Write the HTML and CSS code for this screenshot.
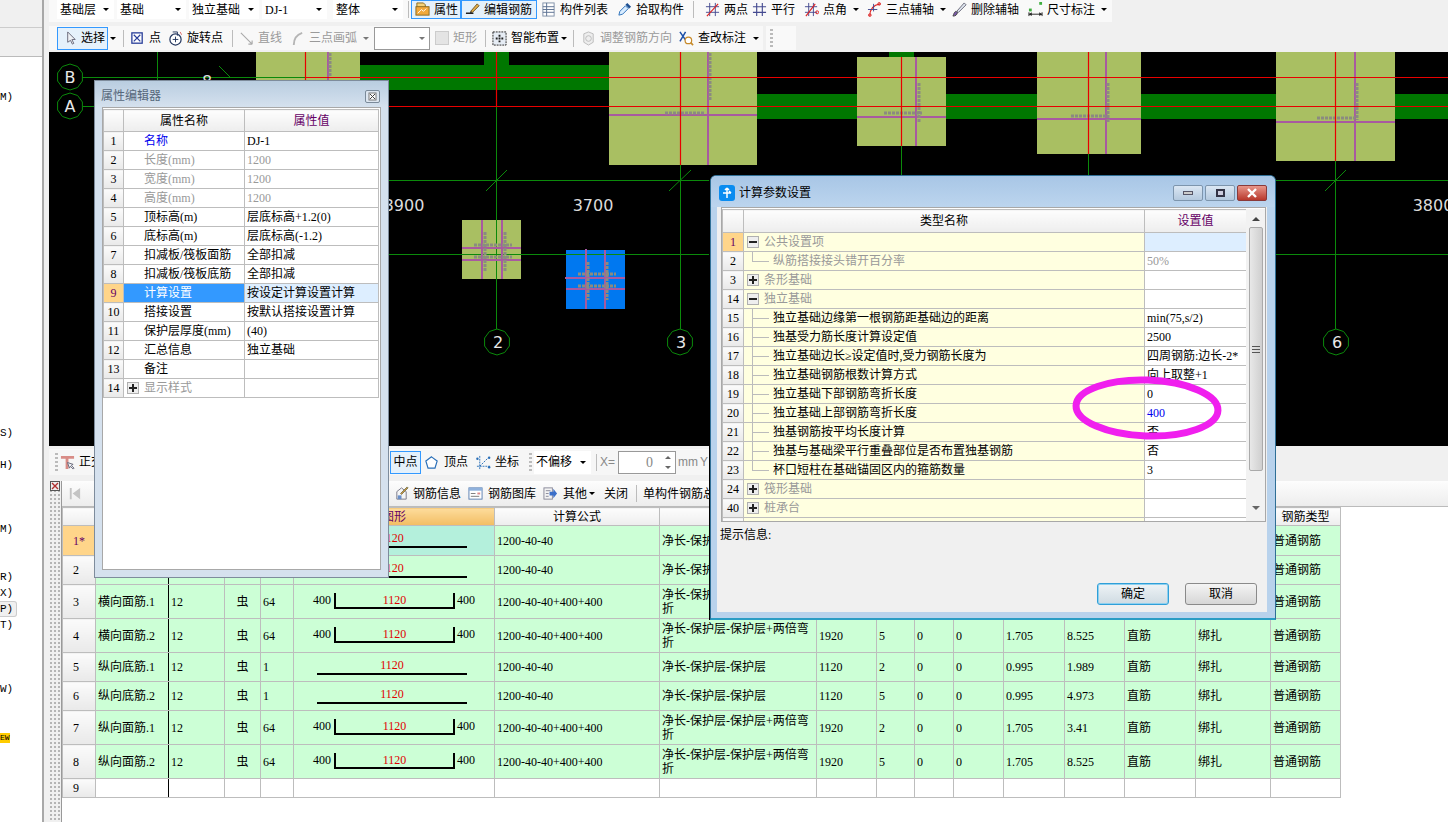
FILE: index.html
```html
<!DOCTYPE html>
<html lang="zh-CN">
<head>
<meta charset="utf-8">
<title>钢筋算量</title>
<link rel="stylesheet" href="styles.css">
</head>
<body>
<svg class="defs" width="0" height="0" aria-hidden="true">
  <symbol id="i-attr" viewBox="0 0 16 16"><path d="M2 1h7l2 2v3H2z" fill="#f4d27a" stroke="#8a6a20"/><rect x="1" y="5" width="14" height="9" fill="#f2a93b" stroke="#8a6a20"/><path d="M3 12l4-4 2 2 3-3" stroke="#fff" fill="none"/></symbol>
  <symbol id="i-edit" viewBox="0 0 16 16"><path d="M1 12h8" stroke="#222" stroke-width="1.6"/><path d="M6 10l7-8 2 2-7 7z" fill="#e7b04a" stroke="#6a5020"/><path d="M5 12l1-2 2 1z" fill="#222"/></symbol>
  <symbol id="i-list" viewBox="0 0 16 16"><rect x="2" y="1" width="12" height="14" fill="#fff" stroke="#8090a8"/><path d="M6 1v14M2 5h12M2 8h12M2 11h12" stroke="#5a6f90"/></symbol>
  <symbol id="i-pick" viewBox="0 0 16 16"><path d="M2 14l1-4 6-6 3 3-6 6z" fill="#d8ecff" stroke="#2a6fb8"/><path d="M9 3l2-2 4 4-2 2z" fill="#1d4f91"/></symbol>
  <symbol id="i-two" viewBox="0 0 16 16"><path d="M5 1v14M11 1v14M1 5h14M1 11h14" stroke="#444a90"/><path d="M2 15L14 2" stroke="#d22" stroke-width="1.2"/></symbol>
  <symbol id="i-par" viewBox="0 0 16 16"><path d="M5 1v14M11 1v14M1 5h14M1 11h14" stroke="#444a90" stroke-width="1.2"/></symbol>
  <symbol id="i-ang" viewBox="0 0 16 16"><path d="M5 1v14M10 1v14M1 5h13M1 11h13" stroke="#444a90"/><path d="M2 15L12 2" stroke="#d22" stroke-width="1.2"/><circle cx="14" cy="11" r="1.6" fill="none" stroke="#d22"/></symbol>
  <symbol id="i-arc" viewBox="0 0 16 16"><path d="M3 15C3 8 7 3 14 2" fill="none" stroke="#d22" stroke-width="1.2"/><path d="M1 8h10M7 2v8" stroke="#444a90"/><circle cx="13" cy="2" r="1.4" fill="none" stroke="#d22"/><circle cx="3" cy="14" r="1.4" fill="none" stroke="#d22"/></symbol>
  <symbol id="i-del" viewBox="0 0 16 16"><path d="M1 15c3 0 4-1 5-4l-2-1c-2 1-2 3-3 5z" fill="#7a5aa8" stroke="#444"/><path d="M5 10L13 1l2 2-8 8z" fill="#dfe6ef" stroke="#667"/></symbol>
  <symbol id="i-dim" viewBox="0 0 16 16"><rect x="1" y="7" width="3" height="3" fill="#3fae3f"/><rect x="12" y="0" width="3" height="3" fill="#3fae3f"/><path d="M1 11v4M15 11v4M1 13h14" stroke="#222"/><path d="M1 13l3-2v4zM15 13l-3-2v4z" fill="#222"/></symbol>
  <symbol id="i-sel" viewBox="0 0 16 16"><path d="M5 1v11l3-2 2 4 1.500-.8-2-4 3.500-.2z" fill="#eef1f5" stroke="#667"/></symbol>
  <symbol id="i-pt" viewBox="0 0 16 16"><rect x="2" y="2" width="11" height="11" fill="#fff" stroke="#2a3f9a" stroke-width="1.400"/><path d="M4 4l7 7M11 4l-7 7" stroke="#2a3f9a" stroke-width="1.300"/></symbol>
  <symbol id="i-rot" viewBox="0 0 16 16"><circle cx="8" cy="9" r="6" fill="#fff" stroke="#23365e" stroke-width="1.300"/><path d="M8 6v6M5 9h6" stroke="#23365e"/><path d="M5 1h5v4" fill="none" stroke="#23365e"/><path d="M13 1l1.500 3" stroke="#d66"/></symbol>
  <symbol id="i-line" viewBox="0 0 16 16"><path d="M2 2l12 12M14 14l-4 0M14 14l0-4" stroke="#aaa" fill="none" stroke-width="1.200"/></symbol>
  <symbol id="i-garc" viewBox="0 0 16 16"><path d="M4 15C4 9 7 4 13 2" stroke="#b5b5b5" fill="none" stroke-width="2"/></symbol>
  <symbol id="i-smart" viewBox="0 0 16 16"><rect x="1" y="1" width="14" height="14" fill="#e6ecf4" stroke="#222" stroke-dasharray="2 1"/><path d="M8 4v8M4 8h8" stroke="#222" stroke-width="2" stroke-dasharray="2 1"/></symbol>
  <symbol id="i-adj" viewBox="0 0 16 16"><path d="M3 3l5-2 5 2v9l-5 3-5-3z" fill="#eee" stroke="#bbb"/><circle cx="8" cy="8" r="3" fill="none" stroke="#bbb"/></symbol>
  <symbol id="i-chk" viewBox="0 0 16 16"><path d="M1 1l7 10M7 1L1 11" stroke="#1b4fa8" stroke-width="1.600"/><circle cx="10" cy="10" r="3.500" fill="#fff" stroke="#c78a2a" stroke-width="1.300"/><path d="M12.500 12.500l2.500 2.500" stroke="#c78a2a" stroke-width="1.800"/></symbol>
  <symbol id="i-t" viewBox="0 0 16 16"><path d="M1 1h14v3H9v11H6V4H1z" fill="#d88c86"/><path d="M8 8l2 6 1-2 3 3 1-1-3-3 2-1z" fill="#eef1f5" stroke="#667"/></symbol>
  <symbol id="i-pent" viewBox="0 0 16 16"><path d="M8 2l6 4.500-2.300 7.500H4.300L2 6.500z" fill="#fff" stroke="#2a6fb8" stroke-width="1.300"/></symbol>
  <symbol id="i-coord" viewBox="0 0 16 16"><path d="M4 1v14M1 12h14M4 12L13 3" stroke="#2a6fb8" fill="none" stroke-dasharray="2 1"/><circle cx="1.500" cy="4" r="1.300" fill="#2a6fb8"/><circle cx="14" cy="3" r="1.300" fill="#2a6fb8"/><circle cx="14" cy="13" r="1.300" fill="#2a6fb8"/></symbol>
  <symbol id="i-info" viewBox="0 0 16 16"><path d="M3 6l5-4 5 4v8H3z" fill="#f5f5f5" stroke="#778"/><path d="M7 8L14 1l1 1-7 7z" fill="#d89a3a" stroke="#775"/><rect x="4" y="10" width="4" height="4" fill="#6a8fc8"/></symbol>
  <symbol id="i-lib" viewBox="0 0 16 16"><rect x="1" y="2" width="14" height="12" fill="#fff" stroke="#5a7fb0"/><rect x="1" y="2" width="14" height="3" fill="#8fb1dc"/><path d="M3 8h5M3 11h9" stroke="#777"/><rect x="10" y="7" width="3" height="2" fill="#d88"/></symbol>
  <symbol id="i-other" viewBox="0 0 16 16"><rect x="1" y="2" width="9" height="12" fill="#f3f3f3" stroke="#889"/><path d="M3 5h5M3 8h3M3 11h3" stroke="#889"/><path d="M7 6h4V3l4 5-4 5v-3H7z" fill="#3b6fc9"/></symbol>
  <symbol id="i-first" viewBox="0 0 16 16"><path d="M3 2h2v12H3zM14 2v12L6 8z" fill="#c4c4c4"/></symbol>
  <symbol id="bub" viewBox="-14 -14 28 28"><path d="M12.400 4L7.600 10.500 0 13-7.600 10.500-12.400 4-12.400-4-7.600-10.500 0-13 7.600-10.500 12.400-4z" fill="none" stroke="#0b8a0b"/></symbol>
</svg>

<div class="app">
  <aside class="side">
    <div class="side-top"></div>
    <div class="side-top2"></div>
    <ul class="menu">
      <li></li><li></li><li>M)</li><li></li><li></li><li></li><li></li><li></li><li></li><li></li><li></li><li></li><li></li><li></li><li></li><li></li><li></li><li></li><li></li><li></li><li></li><li></li><li></li>
      <li>S)</li><li></li><li>H)</li><li></li><li></li><li></li><li>M)</li><li></li><li></li><li>R)</li><li>X)</li><li class="on">P)</li><li>T)</li><li></li><li></li><li></li><li>W)</li><li></li><li></li><li><span class="ew">EW</span></li>
    </ul>
  </aside>

  <main class="main">
    <div class="bar bar1">
      <span class="combo w60">基础层<i class="arr"></i></span>
      <span class="combo w72">基础<i class="arr"></i></span>
      <span class="combo w73">独立基础<i class="arr"></i></span>
      <span class="combo w71">DJ-1<i class="arr"></i></span>
      <span class="combo w70">整体<i class="arr"></i></span>
      <span class="sep m5"></span>
      <span class="t pressed w50 m2"><svg class="ic"><use href="#i-attr"/></svg>属性</span>
      <span class="t pressed w76"><svg class="ic"><use href="#i-edit"/></svg>编辑钢筋</span>
      <span class="t m4"><svg class="ic"><use href="#i-list"/></svg>构件列表</span>
      <span class="t m9"><svg class="ic"><use href="#i-pick"/></svg>拾取构件</span>
      <span class="sep m9"></span>
      <span class="t m11"><svg class="ic"><use href="#i-two"/></svg>两点</span>
      <span class="t m4"><svg class="ic"><use href="#i-par"/></svg>平行</span>
      <span class="t m9"><svg class="ic"><use href="#i-ang"/></svg>点角</span><i class="arr m6"></i>
      <span class="t m8"><svg class="ic"><use href="#i-arc"/></svg>三点辅轴</span><i class="arr m6"></i>
      <span class="t m6"><svg class="ic"><use href="#i-del"/></svg>删除辅轴</span>
      <span class="t m9"><svg class="ic"><use href="#i-dim"/></svg>尺寸标注</span><i class="arr m6"></i>
    </div>

    <div class="bar-row2">
      <div class="bar bar2">
        <span class="t selected w51"><svg class="ic"><use href="#i-sel"/></svg>选择</span><i class="arr m2"></i>
        <span class="sep m7"></span>
        <span class="t m6"><svg class="ic"><use href="#i-pt"/></svg>点</span>
        <span class="t m7"><svg class="ic"><use href="#i-rot"/></svg>旋转点</span>
        <span class="sep m9"></span>
        <span class="t off m6"><svg class="ic"><use href="#i-line"/></svg>直线</span>
        <span class="t off m8"><svg class="ic"><use href="#i-garc"/></svg>三点画弧</span><i class="arr grey m6"></i>
        <span class="drop m5"><i class="arr grey"></i></span>
        <span class="t off m5"><span class="box"></span>矩形</span>
        <span class="sep m8"></span>
        <span class="t m6"><svg class="ic"><use href="#i-smart"/></svg>智能布置</span><i class="arr m2"></i>
        <span class="sep m6"></span>
        <span class="t off m7"><svg class="ic"><use href="#i-adj"/></svg>调整钢筋方向</span>
        <span class="t m7"><svg class="ic"><use href="#i-chk"/></svg>查改标注</span><i class="arr m7"></i>
      </div>
      <div class="bar bar2b"><span class="grip"></span></div>
    </div>

    <div class="canvas">
      <svg class="cad" viewBox="49 52 1399 394" width="1399" height="394">
        <g fill="#007700">
          <rect x="360" y="65" width="249" height="25"/>
          <rect x="484" y="52" width="25" height="13"/>
          <rect x="889" y="52" width="25" height="5"/>
          <rect x="757" y="94" width="100" height="25"/>
          <rect x="946" y="94" width="91" height="25"/>
          <rect x="1141" y="94" width="135" height="25"/>
          <rect x="1395" y="94" width="53" height="25"/>
        </g>
        <g fill="#a9bf62">
          <rect x="256" y="52" width="104" height="60"/>
          <rect x="609" y="52" width="148" height="113"/>
          <rect x="857" y="57" width="89" height="89"/>
          <rect x="1037" y="52" width="104" height="102"/>
          <rect x="1276" y="52" width="119" height="109"/>
          <rect x="462" y="220" width="59" height="59"/>
        </g>
        <rect x="566" y="250" width="59" height="59" fill="#0078f0"/>
        <g stroke="#0b8a0b" fill="none">
          <path d="M82 77.500H305M83 106.500H96M157.500 52V92M219 66L231 78"/>
          <path d="M388 180.500H710M388 254.500H710M496.500 107V329M680.500 107V329M486 191L507 170M669 191L691 170"/>
          <path d="M901.500 146V180M1088.500 154V180M1335.500 161V329M1276 180.500H1448M1276 254.500H1448M1325 191L1346 170"/>
        </g>
        <g stroke="#a85aa0" stroke-width="2" fill="none">
          <path d="M328 52V112M708 52V165M609 115H757M916 57V146M857 117H946M1106 52V154M1037 119H1141M1355 52V161M1276 122H1395"/>
          <path d="M482 220V279M502 220V279M462 248H521M462 260H521M586 249V309M605 250V309M565 278H625M566 289H625"/>
        </g>
        <g stroke="#8b8b80" stroke-width="3" stroke-dasharray="3 1" fill="none">
          <path d="M330 53V76M710 53V100M665 113H705M919 83V123M884 113H922M1108 83V123M1071 116H1108M1357 83V120M1317 118H1355"/>
          <path d="M485 232V272M505 232V272M474 245H512M474 257H512M588 262V300M607 262V300M578 274H616M578 286H616"/>
        </g>
        <g stroke="#e80000" stroke-width="1.200" fill="none">
          <path d="M305 77.500H1448M94 106.500H1448M305.500 52V112M496.500 52V107M680.500 52V165M901.500 57V146M1088.500 52V154M1335.500 52V161"/>
        </g>
        <use href="#bub" x="56" y="63" width="28" height="28"/>
        <use href="#bub" x="56" y="92" width="28" height="28"/>
        <use href="#bub" x="483" y="328" width="28" height="28"/>
        <use href="#bub" x="666" y="328" width="28" height="28"/>
        <use href="#bub" x="1322" y="328" width="28" height="28"/>
        <g class="cad-bub">
          <text x="70" y="83">B</text>
          <text x="70" y="112">A</text>
          <text x="498" y="348">2</text>
          <text x="681" y="348">3</text>
          <text x="1337" y="348">6</text>
        </g>
        <g class="cad-dim">
          <text x="207" y="87">8</text>
          <text x="404" y="211">3900</text>
          <text x="593" y="211">3700</text>
          <text x="1433" y="211">3800</text>
        </g>
      </svg>
    </div>

    <div class="strip3">
      <div class="bar bar3">
        <div class="bar3-left">
          <span class="grip"></span>
          <span class="t m2"><svg class="ic"><use href="#i-t"/></svg>正交</span>
        </div>
        <span class="t selected w31 center">中点</span>
        <span class="t m3 g5"><svg class="ic"><use href="#i-pent"/></svg>顶点</span>
        <span class="t m8"><svg class="ic"><use href="#i-coord"/></svg>坐标</span>
        <span class="grip m10"></span>
        <span class="combo w57 m2">不偏移<i class="arr"></i></span>
        <span class="sep m5"></span>
        <span class="grey-t m3">X=</span>
        <span class="spin m3">0<i class="spin-a"></i></span>
        <span class="grey-t m2">mm</span>
        <span class="grey-t m2">Y</span>
      </div>
    </div>

    <section class="pane">
      <div class="pane-side">
        <svg class="pane-x" width="10" height="10" viewBox="0 0 10 10"><rect x=".5" y=".5" width="9" height="9" fill="#eee" stroke="#555"/><path d="M2 2l6 6M8 2L2 8" stroke="#b03030" stroke-width="1.400"/></svg>
      </div>
      <div class="pane-body">
        <div class="bar bar4">
          <div class="bar4-left"><svg class="ic"><use href="#i-first"/></svg></div>
          <span class="t"><svg class="ic"><use href="#i-info"/></svg>钢筋信息</span>
          <span class="t m7 g5"><svg class="ic"><use href="#i-lib"/></svg>钢筋图库</span>
          <span class="t m7 g5"><svg class="ic"><use href="#i-other"/></svg>其他</span><i class="arr m2"></i>
          <span class="t m9">关闭</span>
          <span class="sep m8"></span>
          <span class="t m6">单构件钢筋总重</span>
        </div>
        <table class="rebar">
          <colgroup>
            <col class="k33"><col class="k73"><col class="k56"><col class="k36"><col class="k33"><col class="k201"><col class="k165"><col class="k157"><col class="k60"><col class="k38"><col class="k39"><col class="k50"><col class="k61"><col class="k60"><col class="k71"><col class="k75"><col class="k70">
          </colgroup>
          <thead>
            <tr class="h18"><th></th><th>筋号</th><th>直径(mm)</th><th>级别</th><th>图号</th><th class="hot">图形</th><th>计算公式</th><th>公式描述</th><th>长度(mm)</th><th>根数</th><th>搭接</th><th>损耗(%)</th><th>单重(kg)</th><th>总重(kg)</th><th>钢筋归类</th><th>搭接形式</th><th>钢筋类型</th></tr>
          </thead>
          <tbody>
            <tr class="h30"><td class="no cur">1*</td><td class="rule">横向底筋.1</td><td>12</td><td class="mid">虫</td><td>1</td><td class="shape act"><div class="st">1120</div></td><td>1200-40-40</td><td>净长-保护层-保护层</td><td>1120</td><td>2</td><td>0</td><td>0</td><td>0.995</td><td>1.989</td><td>直筋</td><td>绑扎</td><td>普通钢筋</td></tr>
            <tr class="h29"><td class="no">2</td><td class="rule">横向底筋.2</td><td>12</td><td class="mid">虫</td><td>1</td><td class="shape"><div class="st">1120</div></td><td>1200-40-40</td><td>净长-保护层-保护层</td><td>1120</td><td>5</td><td>0</td><td>0</td><td>0.995</td><td>4.973</td><td>直筋</td><td>绑扎</td><td>普通钢筋</td></tr>
            <tr class="h34"><td class="no">3</td><td class="rule">横向面筋.1</td><td>12</td><td class="mid">虫</td><td>64</td><td class="shape"><div class="bt"><span>400</span><b>1120</b><span>400</span></div></td><td>1200-40-40+400+400</td><td class="wrap">净长-保护层-保护层+两倍弯折</td><td>1920</td><td>2</td><td>0</td><td>0</td><td>1.705</td><td>3.41</td><td>直筋</td><td>绑扎</td><td>普通钢筋</td></tr>
            <tr class="h34"><td class="no">4</td><td class="rule">横向面筋.2</td><td>12</td><td class="mid">虫</td><td>64</td><td class="shape"><div class="bt"><span>400</span><b>1120</b><span>400</span></div></td><td>1200-40-40+400+400</td><td class="wrap">净长-保护层-保护层+两倍弯折</td><td>1920</td><td>5</td><td>0</td><td>0</td><td>1.705</td><td>8.525</td><td>直筋</td><td>绑扎</td><td>普通钢筋</td></tr>
            <tr class="h29"><td class="no">5</td><td class="rule">纵向底筋.1</td><td>12</td><td class="mid">虫</td><td>1</td><td class="shape"><div class="st">1120</div></td><td>1200-40-40</td><td>净长-保护层-保护层</td><td>1120</td><td>2</td><td>0</td><td>0</td><td>0.995</td><td>1.989</td><td>直筋</td><td>绑扎</td><td>普通钢筋</td></tr>
            <tr class="h29"><td class="no">6</td><td class="rule">纵向底筋.2</td><td>12</td><td class="mid">虫</td><td>1</td><td class="shape"><div class="st">1120</div></td><td>1200-40-40</td><td>净长-保护层-保护层</td><td>1120</td><td>5</td><td>0</td><td>0</td><td>0.995</td><td>4.973</td><td>直筋</td><td>绑扎</td><td>普通钢筋</td></tr>
            <tr class="h34"><td class="no">7</td><td class="rule">纵向面筋.1</td><td>12</td><td class="mid">虫</td><td>64</td><td class="shape"><div class="bt"><span>400</span><b>1120</b><span>400</span></div></td><td>1200-40-40+400+400</td><td class="wrap">净长-保护层-保护层+两倍弯折</td><td>1920</td><td>2</td><td>0</td><td>0</td><td>1.705</td><td>3.41</td><td>直筋</td><td>绑扎</td><td>普通钢筋</td></tr>
            <tr class="h34"><td class="no">8</td><td class="rule">纵向面筋.2</td><td>12</td><td class="mid">虫</td><td>64</td><td class="shape"><div class="bt"><span>400</span><b>1120</b><span>400</span></div></td><td>1200-40-40+400+400</td><td class="wrap">净长-保护层-保护层+两倍弯折</td><td>1920</td><td>5</td><td>0</td><td>0</td><td>1.705</td><td>8.525</td><td>直筋</td><td>绑扎</td><td>普通钢筋</td></tr>
            <tr class="h19 blank"><td class="no">9</td><td class="rule"></td><td></td><td></td><td></td><td></td><td></td><td></td><td></td><td></td><td></td><td></td><td></td><td></td><td></td><td></td><td></td></tr>
          </tbody>
        </table>
      </div>
    </section>
  </main>

  <!-- floating property editor -->
  <div class="win prop">
    <div class="prop-title"><span>属性编辑器</span>
      <svg class="prop-x" viewBox="0 0 15 13" width="15" height="13"><rect x=".5" y=".5" width="14" height="12" rx="1.500" fill="#dde6f0" stroke="#7a8a9a"/><rect x="4" y="3" width="7" height="7" fill="#fff" stroke="#777"/><path d="M5 4l5 5M10 4l-5 5" stroke="#444"/></svg>
    </div>
    <div class="prop-body">
      <table class="grid prop-grid">
        <colgroup><col class="p20"><col class="p121"><col class="p134"></colgroup>
        <thead><tr class="hh"><th></th><th>属性名称</th><th class="hot">属性值</th></tr></thead>
        <tbody>
          <tr><td class="no">1</td><td class="pad blue">名称</td><td>DJ-1</td></tr>
          <tr class="dim"><td class="no">2</td><td class="pad">长度(mm)</td><td>1200</td></tr>
          <tr class="dim"><td class="no">3</td><td class="pad">宽度(mm)</td><td>1200</td></tr>
          <tr class="dim"><td class="no">4</td><td class="pad">高度(mm)</td><td>1200</td></tr>
          <tr><td class="no">5</td><td class="pad">顶标高(m)</td><td>层底标高+1.2(0)</td></tr>
          <tr><td class="no">6</td><td class="pad">底标高(m)</td><td>层底标高(-1.2)</td></tr>
          <tr><td class="no">7</td><td class="pad">扣减板/筏板面筋</td><td>全部扣减</td></tr>
          <tr><td class="no">8</td><td class="pad">扣减板/筏板底筋</td><td>全部扣减</td></tr>
          <tr class="sel"><td class="no cur">9</td><td class="pad">计算设置</td><td>按设定计算设置计算</td></tr>
          <tr><td class="no">10</td><td class="pad">搭接设置</td><td>按默认搭接设置计算</td></tr>
          <tr><td class="no">11</td><td class="pad">保护层厚度(mm)</td><td>(40)</td></tr>
          <tr><td class="no">12</td><td class="pad">汇总信息</td><td>独立基础</td></tr>
          <tr><td class="no">13</td><td class="pad">备注</td><td></td></tr>
          <tr class="dim"><td class="no">14</td><td class="pad0"><span class="exp plus"></span>显示样式</td><td></td></tr>
        </tbody>
      </table>
    </div>
  </div>

  <!-- floating calculation settings dialog -->
  <div class="win dlg">
    <div class="dlg-title">
      <svg class="dlg-ic" viewBox="0 0 16 16" width="16" height="16"><rect width="16" height="16" rx="3" fill="#0a8cf0"/><path d="M8 3v10M4 8h8M8 3L6 5M8 3l2 2M12 8l-2-2" stroke="#fff" fill="none" stroke-width="1.500"/></svg>
      <span class="dlg-name">计算参数设置</span>
      <span class="wbtn"><i class="g-min"></i></span>
      <span class="wbtn"><i class="g-max"></i></span>
      <span class="wbtn close"><svg viewBox="0 0 12 10" width="12" height="10"><path d="M2 1l8 8M10 1L2 9" stroke="#fff" stroke-width="2.400"/></svg></span>
    </div>
    <div class="dlg-body">
      <div class="dlg-frame">
        <div class="dlg-scroll">
          <table class="grid dlg-grid">
            <colgroup><col class="d20"><col class="d401"><col class="d102"></colgroup>
            <thead><tr class="hh"><th></th><th>类型名称</th><th class="hot">设置值</th></tr></thead>
            <tbody>
              <tr class="dim"><td class="no cur">1</td><td class="nm pad0"><span class="exp"></span>公共设置项</td><td class="val-sel"></td></tr>
              <tr class="dim"><td class="no">2</td><td class="nm tree end">纵筋搭接接头错开百分率</td><td>50%</td></tr>
              <tr class="dim"><td class="no">3</td><td class="nm pad0"><span class="exp plus"></span>条形基础</td><td></td></tr>
              <tr class="dim"><td class="no">14</td><td class="nm pad0"><span class="exp"></span>独立基础</td><td></td></tr>
              <tr><td class="no">15</td><td class="nm tree">独立基础边缘第一根钢筋距基础边的距离</td><td>min(75,s/2)</td></tr>
              <tr><td class="no">16</td><td class="nm tree">独基受力筋长度计算设定值</td><td>2500</td></tr>
              <tr><td class="no">17</td><td class="nm tree">独立基础边长≥设定值时,受力钢筋长度为</td><td class="clip">四周钢筋:边长-2*</td></tr>
              <tr><td class="no">18</td><td class="nm tree">独立基础钢筋根数计算方式</td><td>向上取整+1</td></tr>
              <tr><td class="no">19</td><td class="nm tree">独立基础下部钢筋弯折长度</td><td>0</td></tr>
              <tr><td class="no">20</td><td class="nm tree">独立基础上部钢筋弯折长度</td><td class="blue">400</td></tr>
              <tr><td class="no">21</td><td class="nm tree">独基钢筋按平均长度计算</td><td>否</td></tr>
              <tr><td class="no">22</td><td class="nm tree">独基与基础梁平行重叠部位是否布置独基钢筋</td><td>否</td></tr>
              <tr><td class="no">23</td><td class="nm tree end">杯口短柱在基础锚固区内的箍筋数量</td><td>3</td></tr>
              <tr class="dim"><td class="no">24</td><td class="nm pad0"><span class="exp plus"></span>筏形基础</td><td></td></tr>
              <tr class="dim"><td class="no">40</td><td class="nm pad0"><span class="exp plus"></span>桩承台</td><td></td></tr>
              <tr class="dim"><td class="no"></td><td class="nm"></td><td></td></tr>
            </tbody>
          </table>
        </div>
        <div class="vbar">
          <i class="up"></i>
          <div class="thumb"><i class="thumb-grip"></i></div>
          <i class="down"></i>
        </div>
      </div>
      <div class="hint">提示信息:</div>
      <div class="dlg-actions">
        <span class="btn primary">确定</span>
        <span class="btn">取消</span>
      </div>
    </div>
  </div>

  <svg class="ring" viewBox="0 0 170 80" width="170" height="80"><ellipse cx="85" cy="39" rx="71" ry="28" fill="none" stroke="#f01fee" stroke-width="7" transform="rotate(2 85 39)"/></svg>
</div>
</body>
</html>
```
FILE: styles.css
```css
* { box-sizing: border-box; }
html, body { margin: 0; padding: 0; }
body {
  width: 1448px;
  height: 822px;
  overflow: hidden;
  background: #fff;
  color: #000;
  font: 12px/16px "Liberation Serif", "Noto Sans CJK SC", sans-serif;
}
.defs { position: absolute; }
i { display: block; font-style: normal; }

.app { position: relative; display: flex; width: 1448px; height: 822px; overflow: hidden; }

/* left menu column */
.side { width: 44px; flex: none; background: #fff; border-right: 2px solid #a8a8a8; overflow: hidden; }
.side-top { height: 28px; background: #f0f0f0; border-bottom: 1px solid #ccc; }
.side-top2 { height: 29px; background: #f0f0f0; border-bottom: 1px solid #bbb; }
.menu { list-style: none; margin: 0; padding: 0; font: 11px/16px "Liberation Mono", monospace; }
.menu li { height: 16px; white-space: nowrap; }
.menu li.on { width: 17px; background: #f0f0f0; border: 1px solid #ccc; border-left: 0; border-radius: 0 3px 3px 0; line-height: 14px; }
.ew { background: #ffcc00; font-size: 8px; line-height: 10px; display: inline-block; }

/* main column */
.main { flex: 1; min-width: 0; background: #f0f0f0; padding-left: 5px; display: flex; flex-direction: column; }

.bar { display: flex; align-items: center; white-space: nowrap; }
.bar1 { height: 22px; width: 1063px; padding: 0 0 3px 8px; background: #f9f9f9; }
.bar1 .t, .bar1 .combo { height: 19px; }
.bar-row2 { display: flex; margin-top: 4px; height: 26px; align-items: flex-start; }
.bar2 { height: 24px; width: 714px; padding-left: 8px; background: #f8f8f8; }
.bar2b { height: 24px; width: 30px; margin-left: 3px; padding-left: 4px; background: #f9f9f9; }

.t { display: inline-flex; align-items: center; gap: 4px; flex: none; height: 20px; }
.t.g5 { gap: 5px; }
.ic { width: 15px; height: 15px; flex: none; }
.off { color: #9a9a9a; }
.pressed { border: 1px solid #3399ff; background: #e5f1fb; padding-left: 3px; }
.selected { border: 1px solid #3399ff; background: #e5f1fb; height: 23px; padding-left: 5px; }
.center { justify-content: center; padding-left: 0; }
.w50 { width: 50px; }
.w76 { width: 76px; }
.w51 { width: 51px; gap: 3px; }
.w31 { width: 31px; }
.combo { display: flex; align-items: center; justify-content: space-between; height: 20px; padding: 0 5px 0 3px; background: #fff; flex: none; }
.w60 { width: 57px; margin-right: 3px; }
.w72 { width: 69px; margin-right: 3px; }
.w73 { width: 70px; margin-right: 3px; }
.w71 { width: 65px; margin-right: 6px; }
.w70 { width: 70px; }
.w57 { width: 57px; height: 23px; padding-left: 2px; }
.arr { width: 0; height: 0; border: 3px solid transparent; border-top: 3px solid #000; border-bottom: 0; flex: none; }
.arr.grey { border-top-color: #777; }
.sep { width: 1px; height: 17px; background: #bcbcbc; flex: none; }
.grip { width: 3px; height: 18px; flex: none; background: repeating-linear-gradient(#bbb 0 2px, transparent 2px 4px); }
.box { width: 14px; height: 14px; background: #e4e4e4; border: 1px solid #ccc; flex: none; }
.drop { display: flex; align-items: center; justify-content: flex-end; width: 56px; height: 23px; padding-right: 4px; background: #fff; border: 1px solid #999; flex: none; }
.grey-t { color: #888; font-family: "Liberation Sans", sans-serif; flex: none; }
.spin { position: relative; width: 58px; height: 23px; padding-right: 22px; background: #fff; border: 1px solid #999; text-align: right; line-height: 21px; color: #888; font-size: 14px; flex: none; }
.spin-a { position: absolute; right: 3px; top: 4px; width: 7px; height: 13px; }
.spin-a::before, .spin-a::after { content: ""; position: absolute; left: 0; border: 3px solid transparent; }
.spin-a::before { top: 0; border-top: 0; border-bottom: 3px solid #666; }
.spin-a::after { bottom: 0; border-bottom: 0; border-top: 3px solid #666; }

.m2 { margin-left: 2px; }
.m3 { margin-left: 3px; }
.m4 { margin-left: 4px; }
.m5 { margin-left: 5px; }
.m6 { margin-left: 6px; }
.m7 { margin-left: 7px; }
.m8 { margin-left: 8px; }
.m9 { margin-left: 9px; }
.m10 { margin-left: 10px; }
.m11 { margin-left: 11px; }

/* CAD canvas */
.canvas { height: 394px; background: #000; flex: none; }
.cad { display: block; }
.cad-bub text { fill: #e8e8e8; font: 16px "DejaVu Sans", sans-serif; text-anchor: middle; }
.cad-dim text { fill: #dcdcdc; font: 16px "DejaVu Sans", sans-serif; text-anchor: middle; }

/* snap bar */
.strip3 { height: 35px; padding-top: 3px; flex: none; }
.bar3 { height: 26px; width: 670px; padding-left: 6px; background: #f6f6f6; }
.bar3-left { display: flex; align-items: center; width: 335px; flex: none; }

/* lower pane */
.pane { flex: 1; display: flex; min-height: 0; background: #fff; }
.pane-side { position: relative; width: 13px; flex: none; background: #f0f0f0 radial-gradient(#b5b5b5 1px, transparent 1.2px) 0 0/4px 4px; border-right: 1px solid #999; padding: 0 0 0 1px; }
.pane-x { display: block; }
.pane-body { flex: 1; min-width: 0; }
.bar4 { height: 26px; background: linear-gradient(#fdfdfd, #ededed); border-bottom: 1px solid #bbb; }
.bar4-left { width: 332px; padding-left: 5px; flex: none; display: flex; }

.rebar { table-layout: fixed; width: 1278px; border-collapse: collapse; }
.k33 { width: 33px; } .k73 { width: 73px; } .k56 { width: 56px; } .k36 { width: 36px; }
.k201 { width: 201px; } .k165 { width: 165px; } .k157 { width: 157px; } .k60 { width: 60px; }
.k38 { width: 38px; } .k39 { width: 39px; } .k50 { width: 50px; } .k61 { width: 61px; }
.k71 { width: 71px; } .k75 { width: 75px; } .k70 { width: 70px; }
.h18 { height: 18px; } .h19 { height: 19px; } .h29 { height: 29px; } .h30 { height: 30px; } .h34 { height: 34px; }
.rebar th, .rebar td { border: 1px solid #bdbdbd; padding: 0 0 0 2px; overflow: hidden; white-space: nowrap; font-weight: 400; }
.rebar th { text-align: center; padding: 0; background: linear-gradient(#fdfdfd, #ededed); line-height: 14px; }
.rebar th.hot, .grid th.hot { background: linear-gradient(#fddc9c, #f2bd62); color: #660066; }
.rebar td { background: #ccffd6; }
.rebar .blank td { background: #fff; }
.rebar td.no { background: linear-gradient(#fbfbfb, #e9e9e9); padding-left: 10px; }
.rebar td.no.cur { background: #ffd58a; color: #660066; }
.rebar td.rule { border-right-color: #000; }
.rebar td.mid { text-align: center; padding: 0; }
.rebar td.wrap { white-space: normal; line-height: 14px; padding-right: 0; word-break: break-all; }
.rebar td.shape { padding: 0; vertical-align: top; }
.rebar td.act { background: #b4f0dc; }
.st { margin: 5px 0 0 23px; width: 150px; height: 17px; line-height: 15px; border-bottom: 2px solid #000; text-align: center; color: #e00000; }
.bt { display: flex; margin: 8px 0 0 19px; line-height: 14px; }
.bt span { flex: none; width: 21px; }
.bt span:last-child { padding-left: 2px; }
.bt b { flex: none; width: 121px; height: 16px; font-weight: 400; color: #e00000; text-align: center; border: 2px solid #000; border-top: 0; }

/* floating windows */
.win { position: absolute; }
.prop { left: 94px; top: 80px; width: 295px; height: 498px; background: #d5e1ee; border: 1px solid #7e8c9c; display: flex; flex-direction: column; }
.prop-title { height: 26px; flex: none; display: flex; align-items: center; justify-content: space-between; padding: 4px 8px 0 6px; background: linear-gradient(#b9cde0, #d5e1ee); color: #56677a; }
.prop-body { flex: 1; margin: 0 7px 7px 7px; background: #fff; border: 1px solid #a8a8a8; padding: 1px 0 0 0; }

.grid { table-layout: fixed; border-collapse: collapse; }
.grid th, .grid td { border: 1px solid #bdbdbd; padding: 0 0 0 2px; height: 19px; overflow: hidden; white-space: nowrap; font-weight: 400; background: #fff; }
.grid .hh th { height: 23px; padding: 0; text-align: center; background: linear-gradient(#fdfdfd, #ededed); }
.prop-grid .hh th { height: 22px; }
.grid td.no { text-align: center; padding: 0; background: linear-gradient(#fbfbfb, #e9e9e9); }
.grid td.no.cur { background: #ffd58a; color: #660066; }
.grid .dim td { color: #999; }
.grid .dim td.no { color: #000; }
.grid .dim td.no.cur { color: #660066; }
.grid td.blue { color: #0000ee; }
.p20 { width: 20px; } .p121 { width: 121px; } .p134 { width: 134px; }
.prop-grid td.pad { padding-left: 20px; }
.prop-grid td.pad0 { padding-left: 3px; }
.prop-grid .sel td.pad { background: #3399ff; color: #fff; }
.prop-grid .sel td:last-child { background: #ddeeff; }

.exp { position: relative; display: inline-block; width: 12px; height: 12px; margin-right: 5px; vertical-align: -2px; background: #eee; border: 1px solid #b0b0b0; }
.exp::before { content: ""; position: absolute; left: 1px; right: 1px; top: 4px; height: 2px; background: #222; }
.exp.plus::after { content: ""; position: absolute; top: 1px; bottom: 1px; left: 4px; width: 2px; background: #222; }

.dlg { left: 710px; top: 175px; width: 566px; height: 445px; background: #b8d2ec; border: 1px solid #2f6f96; border-bottom: 2px solid #2a9cc4; border-radius: 6px 6px 0 0; box-shadow: -1px 0 0 #000; display: flex; flex-direction: column; overflow: hidden; }
.dlg-title { height: 31px; flex: none; display: flex; align-items: center; padding: 3px 8px 0 8px; background: linear-gradient(#a8c6e6, #bcd5ee); }
.dlg-ic { flex: none; }
.dlg-name { margin-left: 4px; margin-right: auto; }
.wbtn { display: flex; align-items: center; justify-content: center; width: 30px; height: 16px; margin-left: 2px; border: 1px solid #7d95ad; border-radius: 2px; background: linear-gradient(#dbe7f3, #b4c9de); }
.wbtn.close { border-color: #8a3a3a; background: linear-gradient(#e8968a, #b8382c); }
.g-min { width: 10px; height: 4px; background: #ccc; border: 1px solid #556; }
.g-max { width: 9px; height: 8px; background: #ccd; border: 2px solid #334; }

.dlg-body { flex: 1; min-height: 0; margin: 0 8px 6px 6px; background: #f0f0f0; padding: 0 0 0 4px; display: flex; flex-direction: column; }
.dlg-frame { display: flex; width: 545px; height: 315px; background: #fff; border: 1px solid #a8a8a8; padding: 1px 0 0 0; flex: none; }
.dlg-scroll { width: 524px; height: 312px; overflow: hidden; flex: none; }
.d20 { width: 21px; } .d401 { width: 401px; } .d102 { width: 102px; }
.dlg-grid { width: 524px; }
.dlg-grid td.nm { background: #ffffe0; padding-left: 29px; }
.dlg-grid td.pad0 { padding-left: 3px; }
.dlg-grid td.val-sel { background: #ddeeff; }
.dlg-grid td.clip { overflow: hidden; }
.dlg-grid td.tree { background:
  linear-gradient(#bbb, #bbb) 8px 50%/17px 1px no-repeat,
  linear-gradient(#bbb, #bbb) 8px 0/1px 100% no-repeat,
  #ffffe0; }
.dlg-grid td.tree.end { background:
  linear-gradient(#bbb, #bbb) 8px 50%/17px 1px no-repeat,
  linear-gradient(#bbb, #bbb) 8px 0/1px 50% no-repeat,
  #ffffe0; }

.vbar { flex: 1; display: flex; flex-direction: column; align-items: center; background: #f2f2f2; padding-top: 8px; }
.up { width: 0; height: 0; border: 4px solid transparent; border-bottom: 4px solid #444; border-top: 0; }
.down { width: 0; height: 0; border: 4px solid transparent; border-top: 4px solid #666; border-bottom: 0; margin-top: 35px; }
.thumb { width: 14px; height: 244px; margin-top: 6px; background: linear-gradient(90deg, #e8e8e8, #cfcfcf); border: 1px solid #aaa; border-radius: 2px; display: flex; align-items: center; justify-content: center; }
.thumb-grip { width: 8px; height: 7px; background: repeating-linear-gradient(#555 0 1px, transparent 1px 3px); }

.hint { margin: 5px 0 0 -1px; height: 16px; }
.dlg-actions { display: flex; justify-content: flex-end; gap: 16px; margin-top: 40px; padding-right: 10px; }
.btn { width: 72px; height: 22px; line-height: 20px; text-align: center; border: 1px solid #8a8a8a; border-radius: 3px; background: linear-gradient(#f4f4f4, #d6d6d6); }
.btn.primary { border-color: #2f9fd8; box-shadow: inset 0 0 0 1px #8ed0ef; background: linear-gradient(#eef3f6, #cfdbe2); }

.ring { position: absolute; left: 1062px; top: 369px; pointer-events: none; }
```
